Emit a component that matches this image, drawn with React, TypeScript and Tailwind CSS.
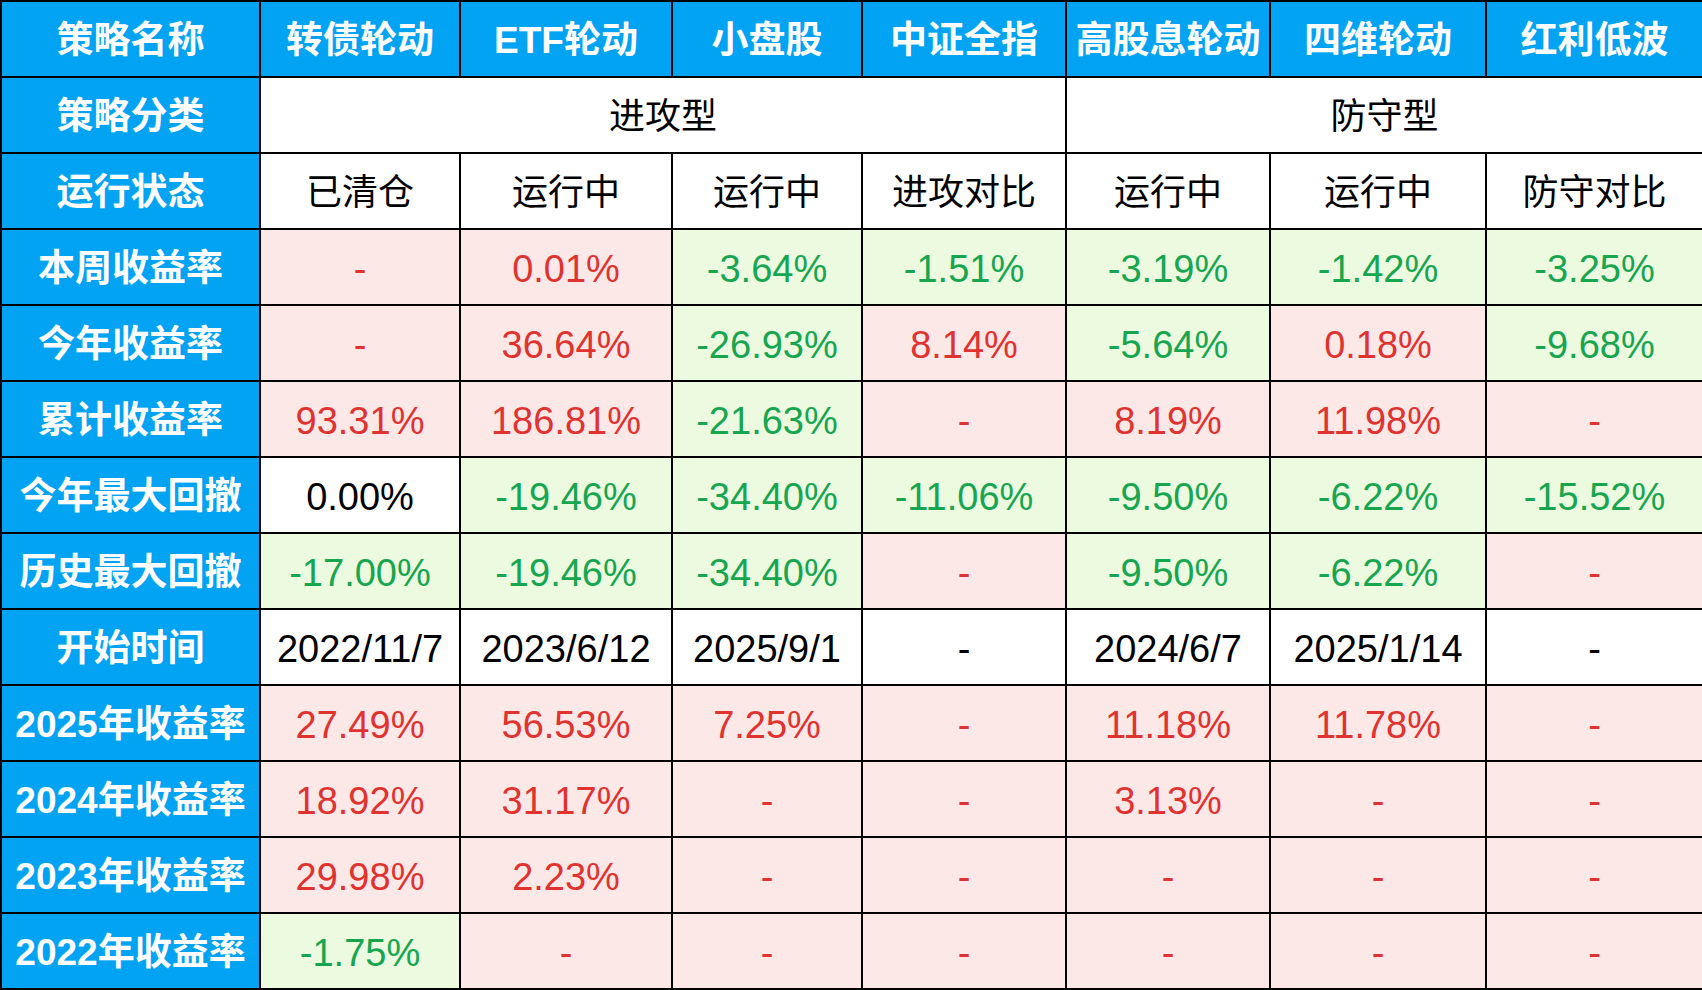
type Tone = 'r' | 'g' | 'w';

const columns = ['转债轮动', 'ETF轮动', '小盘股', '中证全指', '高股息轮动', '四维轮动', '红利低波'];
const widths = [259, 200, 212, 190, 204, 204, 216, 217];

const status = ['已清仓', '运行中', '运行中', '进攻对比', '运行中', '运行中', '防守对比'];

const rows: { label: string; cells: [string, Tone][] }[] = [
  {
    label: '本周收益率',
    cells: [['-', 'r'], ['0.01%', 'r'], ['-3.64%', 'g'], ['-1.51%', 'g'], ['-3.19%', 'g'], ['-1.42%', 'g'], ['-3.25%', 'g']],
  },
  {
    label: '今年收益率',
    cells: [['-', 'r'], ['36.64%', 'r'], ['-26.93%', 'g'], ['8.14%', 'r'], ['-5.64%', 'g'], ['0.18%', 'r'], ['-9.68%', 'g']],
  },
  {
    label: '累计收益率',
    cells: [['93.31%', 'r'], ['186.81%', 'r'], ['-21.63%', 'g'], ['-', 'r'], ['8.19%', 'r'], ['11.98%', 'r'], ['-', 'r']],
  },
  {
    label: '今年最大回撤',
    cells: [['0.00%', 'w'], ['-19.46%', 'g'], ['-34.40%', 'g'], ['-11.06%', 'g'], ['-9.50%', 'g'], ['-6.22%', 'g'], ['-15.52%', 'g']],
  },
  {
    label: '历史最大回撤',
    cells: [['-17.00%', 'g'], ['-19.46%', 'g'], ['-34.40%', 'g'], ['-', 'r'], ['-9.50%', 'g'], ['-6.22%', 'g'], ['-', 'r']],
  },
  {
    label: '开始时间',
    cells: [['2022/11/7', 'w'], ['2023/6/12', 'w'], ['2025/9/1', 'w'], ['-', 'w'], ['2024/6/7', 'w'], ['2025/1/14', 'w'], ['-', 'w']],
  },
  {
    label: '2025年收益率',
    cells: [['27.49%', 'r'], ['56.53%', 'r'], ['7.25%', 'r'], ['-', 'r'], ['11.18%', 'r'], ['11.78%', 'r'], ['-', 'r']],
  },
  {
    label: '2024年收益率',
    cells: [['18.92%', 'r'], ['31.17%', 'r'], ['-', 'r'], ['-', 'r'], ['3.13%', 'r'], ['-', 'r'], ['-', 'r']],
  },
  {
    label: '2023年收益率',
    cells: [['29.98%', 'r'], ['2.23%', 'r'], ['-', 'r'], ['-', 'r'], ['-', 'r'], ['-', 'r'], ['-', 'r']],
  },
  {
    label: '2022年收益率',
    cells: [['-1.75%', 'g'], ['-', 'r'], ['-', 'r'], ['-', 'r'], ['-', 'r'], ['-', 'r'], ['-', 'r']],
  },
];

const toneClass: Record<Tone, string> = {
  r: 'bg-[#fde8e8] text-[#e0322f]',
  g: 'bg-[#ecfadf] text-[#17a650]',
  w: 'bg-white text-black',
};

const font = "font-['Liberation_Sans','Noto_Sans_CJK_SC',sans-serif]";

const HeadCell = ({ children }: { children: React.ReactNode }) => (
  <td className="border-2 border-black bg-[#03a3f4] text-center text-[37px] leading-none font-bold text-white whitespace-nowrap p-0 pt-[3px]">
    {children}
  </td>
);

export default function App() {
  return (
    <div className={`w-[1702px] h-[990px] bg-white ${font}`}>
      <table className="w-[1702px] border-collapse table-fixed">
        <colgroup>
          {widths.map((w, i) => (
            <col key={i} style={{ width: w }} />
          ))}
        </colgroup>
        <tbody>
          <tr className="h-[76px]">
            <HeadCell>策略名称</HeadCell>
            {columns.map((c) => (
              <HeadCell key={c}>{c}</HeadCell>
            ))}
          </tr>
          <tr className="h-[76px]">
            <HeadCell>策略分类</HeadCell>
            <td colSpan={4} className="border-2 border-black bg-white text-center text-[36px] leading-none text-black p-0 pt-[3px]">
              进攻型
            </td>
            <td colSpan={3} className="border-2 border-black bg-white text-center text-[36px] leading-none text-black p-0 pt-[3px]">
              防守型
            </td>
          </tr>
          <tr className="h-[76px]">
            <HeadCell>运行状态</HeadCell>
            {status.map((s, i) => (
              <td key={i} className="border-2 border-black bg-white text-center text-[36px] leading-none text-black p-0 pt-[3px] whitespace-nowrap">
                {s}
              </td>
            ))}
          </tr>
          {rows.map((row) => (
            <tr key={row.label} className="h-[76px]">
              <HeadCell>{row.label}</HeadCell>
              {row.cells.map(([v, t], i) => (
                <td
                  key={i}
                  className={`border-2 border-black text-center text-[38px] leading-none p-0 pt-[3px] whitespace-nowrap ${toneClass[t]}`}
                >
                  {v}
                </td>
              ))}
            </tr>
          ))}
        </tbody>
      </table>
    </div>
  );
}
